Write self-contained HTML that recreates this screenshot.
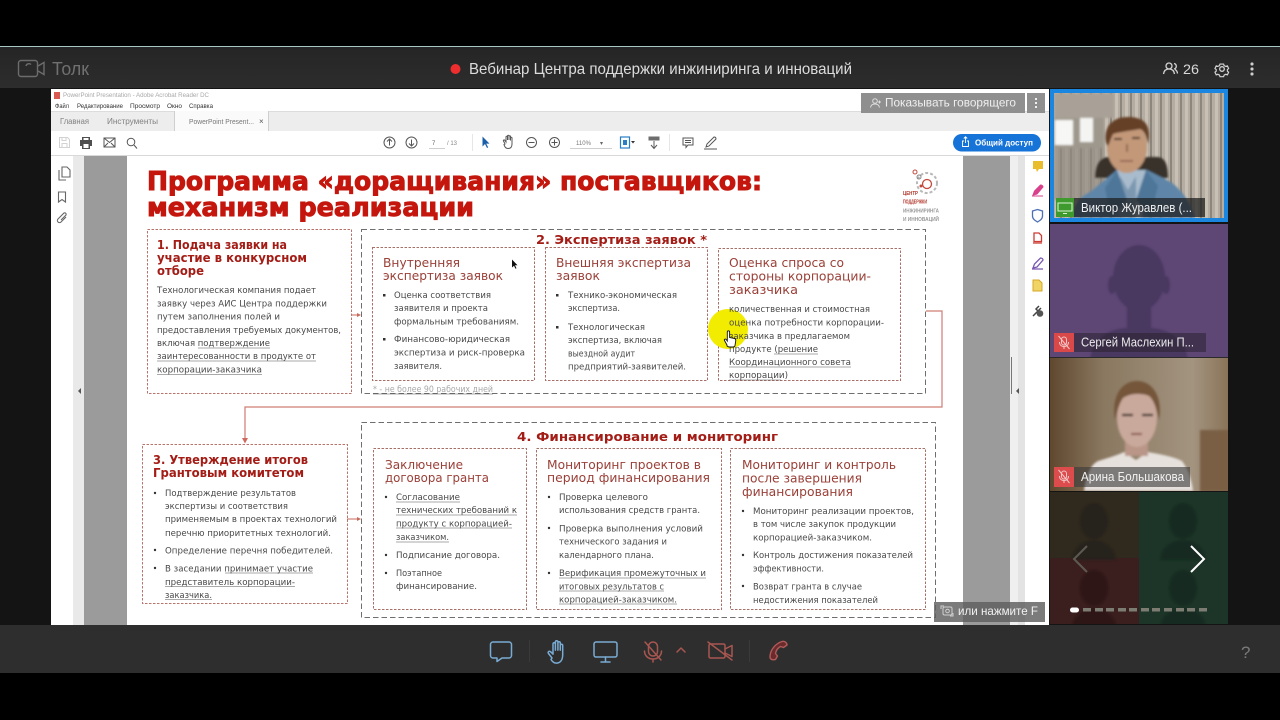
<!DOCTYPE html>
<html lang="ru"><head><meta charset="utf-8"><title>Толк</title>
<style>
html,body{margin:0;padding:0;background:#000;width:1280px;height:720px;overflow:hidden}
svg{display:block}
text{font-family:"DejaVu Sans","Liberation Sans",sans-serif}
.ls text,text.ls{font-family:"Liberation Sans",sans-serif}
.t{font-weight:bold;font-size:26px;fill:#c4170c;stroke:#c4170c;stroke-width:1}
.h{font-weight:bold;font-size:12.5px;fill:#a31c14}
.s{font-size:12.5px;fill:#9a4038}
.b{font-size:9px;fill:#484848}
.m{font-size:6.5px;fill:#333}
</style></head><body>
<svg width="1280" height="720" viewBox="0 0 1280 720" xmlns="http://www.w3.org/2000/svg">
<defs>
<filter id="f3" x="-5%" y="-5%" width="110%" height="110%"><feGaussianBlur stdDeviation=".25"/></filter>
<filter id="f2" x="-20%" y="-20%" width="140%" height="140%"><feGaussianBlur stdDeviation="1"/></filter>
<linearGradient id="hd" x1="0" y1="0" x2="0" y2="1"><stop offset="0" stop-color="#252525"/><stop offset="1" stop-color="#2d2d2d"/></linearGradient>
<linearGradient id="g3" x1="0" y1="0" x2="1" y2="0"><stop offset="0" stop-color="#5f482e"/><stop offset=".3" stop-color="#8a7860"/><stop offset=".8" stop-color="#a39480"/><stop offset="1" stop-color="#8a7458"/></linearGradient>
<pattern id="st" width="10" height="10" patternUnits="userSpaceOnUse"><rect width="10" height="10" fill="#b5ada2"/><rect width="2" height="10" fill="#8d867c"/><rect x="5" width="3" height="10" fill="#c8c0b5"/></pattern>
<clipPath id="c1"><rect x="1054" y="93" width="170" height="125"/></clipPath>
<clipPath id="c2"><rect x="1050" y="224" width="178" height="133"/></clipPath>
<clipPath id="c3"><rect x="1050" y="358" width="178" height="133"/></clipPath>
<clipPath id="c4"><rect x="1050" y="492" width="178" height="132"/></clipPath>
</defs>

<rect width="1280" height="720" fill="#000"/>
<rect y="46" width="1280" height="1" fill="#a9c8c4"/>
<rect y="47" width="1280" height="41" fill="url(#hd)"/>
<rect y="88" width="1280" height="537" fill="#141414"/>
<rect y="625" width="1280" height="48" fill="#2e2e2e"/>

<!-- header -->
<g fill="none" stroke="#6c6c6c" stroke-width="1.4">
<rect x="18.5" y="60.5" width="19" height="16" rx="2.5"/><path d="M38 66l6-3.5v12L38 71"/><path d="M26 66a3 3 0 0 1 5-1.5"/>
</g>
<text x="52" y="75" font-size="18" fill="#707070" textLength="37" lengthAdjust="spacingAndGlyphs" class="ls">Толк</text>
<circle cx="455.500" cy="69" r="5" fill="#ee2e2e"/>
<text x="469" y="74" font-size="16" fill="#dcdcdc" textLength="383" lengthAdjust="spacingAndGlyphs" class="ls">Вебинар Центра поддержки инжиниринга и инноваций</text>
<g fill="none" stroke="#d4d4d4" stroke-width="1.3">
<circle cx="1169" cy="66" r="3"/><path d="M1163.500 74c.5-3.500 2.500-5 5.500-5s5 1.500 5.500 5"/><path d="M1174 63.500a2.800 2.800 0 0 1 0 5.500M1175 69.500c1.500.7 2.300 2.200 2.500 4"/>
<circle cx="1222" cy="69" r="2.300"/><path d="M1220 63.500h4l.6 1.800 1.800.8 1.800-.6 1.400 3-1.400 1.100v1.800l1.400 1.100-1.400 3-1.800-.6-1.800.8-.6 1.800h-4l-.6-1.800-1.800-.8-1.800.6-1.400-3 1.400-1.100v-1.800l-1.400-1.100 1.400-3 1.800.6 1.800-.8z" transform="translate(122 6.900) scale(.9)"/>
</g>
<text x="1183" y="74" font-size="14" fill="#d8d8d8" textLength="16" lengthAdjust="spacingAndGlyphs" class="ls">26</text>
<g fill="#cfcfcf"><rect x="1250.500" y="62.500" width="3" height="3" rx="1"/><rect x="1250.500" y="67.500" width="3" height="3" rx="1"/><rect x="1250.500" y="72.500" width="3" height="3" rx="1"/></g>

<!-- acrobat window -->
<rect x="51" y="89" width="998" height="536" fill="#fff"/>
<rect x="51" y="111" width="998" height="20" fill="#ededed"/>
<rect x="51" y="111" width="998" height=".7" fill="#d4d4d4"/>
<rect x="175" y="111" width="93" height="20" fill="#fafafa"/>
<path d="M174.500 111v20M268.500 111v20" stroke="#cfcfcf"/>
<rect x="51" y="155" width="998" height="1" fill="#d9d9d9"/>
<rect x="54" y="92" width="6" height="7" fill="#d95a50"/>
<g class="ls">
<text x="63" y="97" font-size="6.500" fill="#a8a8a8" textLength="146" lengthAdjust="spacingAndGlyphs">PowerPoint Presentation - Adobe Acrobat Reader DC</text>
<text x="55" y="108" class="m" textLength="14" lengthAdjust="spacingAndGlyphs">Файл</text>
<text x="77" y="108" class="m" textLength="46" lengthAdjust="spacingAndGlyphs">Редактирование</text>
<text x="130" y="108" class="m" textLength="30" lengthAdjust="spacingAndGlyphs">Просмотр</text>
<text x="167" y="108" class="m" textLength="15" lengthAdjust="spacingAndGlyphs">Окно</text>
<text x="189" y="108" class="m" textLength="24" lengthAdjust="spacingAndGlyphs">Справка</text>
<text x="60" y="124" font-size="8" fill="#808080" textLength="29" lengthAdjust="spacingAndGlyphs">Главная</text>
<text x="107" y="124" font-size="8" fill="#808080" textLength="51" lengthAdjust="spacingAndGlyphs">Инструменты</text>
<text x="189" y="124" font-size="7.500" fill="#777" textLength="65" lengthAdjust="spacingAndGlyphs">PowerPoint Present...</text>
<text x="259" y="124" font-size="8" fill="#555">×</text>
<text x="432" y="145" font-size="6" fill="#666">7</text><text x="447" y="145" font-size="6" fill="#888">/ 13</text>
<text x="576" y="145" font-size="6" fill="#777">110%</text><text x="600" y="145" font-size="6" fill="#666">▾</text>
</g>
<!-- toolbar icons -->
<g fill="none" stroke="#d2d2d2"><path d="M59.500 137.500h8l2 2v8h-10zM62 137.500v3h4v-3M62 147.500v-4h5v4"/></g>
<g fill="#4f4f4f"><path d="M82 137h8v3h2v6h-2v3h-8v-3h-2v-6h2zM83.500 138v2h5v-2zM83.500 144v4h5v-4z"/></g>
<g fill="none" stroke="#555" stroke-width="1"><rect x="104" y="138" width="11" height="9"/><path d="M104 138l5.500 4.500 5.500-4.500M104 147l4-4M115 147l-4-4"/><circle cx="131" cy="142" r="3.800"/><path d="M134 145l3 3.500"/>
<circle cx="389.500" cy="142.500" r="5.500"/><path d="M389.500 145.500v-6M387 141.500l2.500-2.500 2.500 2.500"/>
<circle cx="411.500" cy="142.500" r="5.500"/><path d="M411.500 139.500v6M409 143.500l2.500 2.500 2.500-2.500"/>
<circle cx="531.500" cy="142.500" r="5"/><path d="M528.500 142.500h6"/>
<circle cx="554.500" cy="142.500" r="5"/><path d="M551.500 142.500h6M554.500 139.500v6"/>
<path d="M505 144l-1.500-3c-.6-1 1-1.500 1.500-.5l1 1.500v-5c0-1 1.500-1 1.500 0v3-4c0-1 1.500-1 1.500 0v4-3.500c0-1 1.500-1 1.500 0v4-2.500c0-1 1.500-1 1.500 0v6c0 3-1.500 4.500-4 4.500s-3.500-2-4-4z" />
<path d="M683 138h10v7h-5l-2 2.500V145h-3zM685 140.500h6M685 142.500h6"/>
<path d="M706 147l1-3 7-7c1.500 0 2 1 2 2l-7 7zM704 149h13"/>
<path d="M654 141v7M651 145l3 3.500 3-3.500" stroke="#5a5a5a"/></g>
<path d="M482.500 136.500v10l2.500-2.500 2 4 1.200-.6-2-3.800h3.300z" fill="#1a5fa8"/>
<rect x="648.500" y="136.500" width="11" height="4" fill="#6d6d6d"/>
<rect x="620.500" y="137" width="9" height="11" fill="#fff" stroke="#2a7fc4" stroke-width="1.200"/>
<rect x="623" y="140" width="4" height="5" fill="#2a7fc4"/>
<path d="M631 141h4l-2 2.500z" fill="#333"/>
<path d="M429 148.500h16M570 148.500h42" stroke="#cfcfcf"/>
<path d="M472.500 134v17M669.500 134v17" stroke="#e6e6e6"/>
<rect x="953" y="134" width="88" height="17.500" rx="8.700" fill="#1673d8"/>
<path d="M964 141h-1.500v5.500h6V141H967M965.500 143v-6M963.800 138.500l1.700-1.700 1.700 1.700" fill="none" stroke="#fff" stroke-width=".9"/>
<text x="975" y="145.500" font-size="8" font-weight="bold" fill="#fff" textLength="58" lengthAdjust="spacingAndGlyphs" class="ls">Общий доступ</text>

<!-- panes -->
<rect x="73" y="156" width="11" height="469" fill="#e9e9e9"/>
<rect x="84" y="156" width="43" height="469" fill="#9b9b9b"/>
<rect x="963" y="156" width="47" height="469" fill="#9b9b9b"/>
<rect x="1010" y="156" width="8" height="469" fill="#efefef"/>
<rect x="1018" y="156" width="7" height="469" fill="#e3e3e3"/>
<path d="M81 388v6l-3-3z" fill="#555"/>
<path d="M1019 388v6l-3-3z" fill="#555"/>
<path d="M1011.500 357v37" stroke="#777" stroke-width="1"/>
<g fill="none" stroke="#666" stroke-width="1.100"><path d="M62 167h5l3 3v7h-8zM59 170v10h7"/><path d="M58.500 192h7v10l-3.500-2.500-3.500 2.500z"/><path d="M66 217l-5 5a2 2 0 0 1-3-3l6-6a1.500 1.500 0 0 1 2 2l-5 5"/></g>
<!-- right tools -->
<path d="M1033 161h10v8h-4l-2 3-1-3h-3z" fill="#e9bd2b"/>
<path d="M1033 195l1.500-4 6-6c1.500 0 2.500 1 2.500 2l-6 7zM1032 196h11" fill="#d8408c" stroke="#d8408c"/>
<path d="M1037.500 209.500l5 1.500v5c0 3-2.500 4.500-5 6-2.500-1.500-5-3-5-6v-5z" fill="none" stroke="#4c6fb5" stroke-width="1.300"/>
<path d="M1034 233h5l2.500 2.500v6h-7.500zM1033 243h9" fill="none" stroke="#cc3c34" stroke-width="1.300"/>
<path d="M1033 268l1.500-4 6-6c1.500 0 2.500 1 2.500 2l-6 7zM1032 269h11" fill="none" stroke="#7a58b0" stroke-width="1.300"/>
<path d="M1033 280h6l3 3v8h-9z" fill="#f0d466" stroke="#d4a824"/>
<path d="M1033 316l5-5M1039 306l-3 3 2 2 3-3" fill="none" stroke="#444" stroke-width="1.500"/>
<circle cx="1040" cy="313.500" r="3.300" fill="#555"/>

<!-- slide -->
<g filter="url(#f3)">
<rect x="127" y="156" width="836" height="469" fill="#fff"/>
<text x="147" y="190" class="t" textLength="615" lengthAdjust="spacingAndGlyphs">Программа «доращивания» поставщиков:</text>
<text x="147" y="216" class="t" textLength="327" lengthAdjust="spacingAndGlyphs">механизм реализации</text>

<!-- logo -->
<g fill="none" stroke="#b8b8b8" stroke-width="2"><circle cx="927" cy="183" r="10" stroke-dasharray="3 2"/></g>
<circle cx="927" cy="184" r="4.500" fill="none" stroke="#c4483e" stroke-width="1.300"/>
<circle cx="915" cy="172" r="2" fill="none" stroke="#c4483e"/><circle cx="919" cy="177" r="2" fill="none" stroke="#888"/><circle cx="921" cy="186" r="1.500" fill="#c4483e"/>
<g class="ls" font-size="5.500" font-weight="bold">
<text x="903" y="195" fill="#b03428" textLength="15" lengthAdjust="spacingAndGlyphs">ЦЕНТР</text>
<text x="903" y="203.500" fill="#b03428" textLength="24" lengthAdjust="spacingAndGlyphs">ПОДДЕРЖКИ</text>
<text x="903" y="212.500" fill="#999" textLength="36" lengthAdjust="spacingAndGlyphs">ИНЖИНИРИНГА</text>
<text x="903" y="221" fill="#999" textLength="36" lengthAdjust="spacingAndGlyphs">И ИННОВАЦИЙ</text>
</g>

<!-- connectors -->
<path d="M926 311h16v96H245v32" fill="none" stroke="#cf7d74" stroke-width="1.200"/>
<path d="M242 438h6l-3 5.500z" fill="#cf6a5e"/>
<path d="M351 315h8M347 519h12" stroke="#c76a5c" stroke-width="1"/>
<path d="M357 313l4 2-4 2zM357 517l4 2-4 2z" fill="#c76a5c"/>

<!-- boxes -->
<g fill="none" stroke="#b8736a" stroke-width="1" stroke-dasharray="2.500 1.500">
<rect x="147.500" y="229.500" width="204" height="164"/>
<rect x="142.500" y="444.500" width="205" height="159"/>
</g>
<g fill="none" stroke="#6e6e6e" stroke-width="1" stroke-dasharray="5.500 3">
<rect x="361.500" y="229.500" width="564" height="164"/>
<rect x="361.500" y="422.500" width="574" height="195"/>
</g>
<g fill="none" stroke="#aa6f67" stroke-width="1" stroke-dasharray="2.500 1.500">
<rect x="372.500" y="247.500" width="162" height="133"/>
<rect x="545.500" y="247.500" width="162" height="133"/>
<rect x="718.500" y="248.500" width="182" height="132"/>
<rect x="373.500" y="448.500" width="153" height="161"/>
<rect x="536.500" y="448.500" width="185" height="161"/>
<rect x="730.500" y="448.500" width="195" height="161"/>
</g>
<rect x="536" y="236" width="172" height="11" fill="#fff"/>

<!-- box 1 -->
<text x="157" y="249" class="h" textLength="130" lengthAdjust="spacingAndGlyphs">1. Подача заявки на</text>
<text x="157" y="262" class="h" textLength="150" lengthAdjust="spacingAndGlyphs">участие в конкурсном</text>
<text x="157" y="275" class="h" textLength="47" lengthAdjust="spacingAndGlyphs">отборе</text>
<text x="157" y="293" class="b" textLength="159" lengthAdjust="spacingAndGlyphs">Технологическая компания подает</text>
<text x="157" y="306.500" class="b" textLength="170" lengthAdjust="spacingAndGlyphs">заявку через АИС Центра поддержки</text>
<text x="157" y="319.500" class="b" textLength="123" lengthAdjust="spacingAndGlyphs">путем заполнения полей и</text>
<text x="157" y="333" class="b" textLength="184" lengthAdjust="spacingAndGlyphs">предоставления требуемых документов,</text>
<text x="157" y="346" class="b" textLength="113" lengthAdjust="spacingAndGlyphs">включая подтверждение</text>
<text x="157" y="359" class="b" textLength="159" lengthAdjust="spacingAndGlyphs">заинтересованности в продукте от</text>
<text x="157" y="372.500" class="b" textLength="105" lengthAdjust="spacingAndGlyphs">корпорации-заказчика</text>

<!-- box 2 -->
<text x="536" y="244" class="h" font-size="13" textLength="171" lengthAdjust="spacingAndGlyphs">2. Экспертиза заявок *</text>
<text x="383" y="267" class="s" textLength="77" lengthAdjust="spacingAndGlyphs">Внутренняя</text>
<text x="383" y="280" class="s" textLength="120" lengthAdjust="spacingAndGlyphs">экспертиза заявок</text>
<text x="394" y="298" class="b" textLength="97" lengthAdjust="spacingAndGlyphs">Оценка соответствия</text>
<text x="394" y="311" class="b" textLength="94" lengthAdjust="spacingAndGlyphs">заявителя и проекта</text>
<text x="394" y="324.500" class="b" textLength="125" lengthAdjust="spacingAndGlyphs">формальным требованиям.</text>
<text x="394" y="342" class="b" textLength="116" lengthAdjust="spacingAndGlyphs">Финансово-юридическая</text>
<text x="394" y="355.500" class="b" textLength="131" lengthAdjust="spacingAndGlyphs">экспертиза и риск-проверка</text>
<text x="394" y="369" class="b" textLength="48" lengthAdjust="spacingAndGlyphs">заявителя.</text>
<text x="373" y="392" font-size="8.500" fill="#a8a8a8" textLength="120" lengthAdjust="spacingAndGlyphs">* - не более 90 рабочих дней</text>

<text x="556" y="267" class="s" textLength="135" lengthAdjust="spacingAndGlyphs">Внешняя экспертиза</text>
<text x="556" y="280" class="s" textLength="44" lengthAdjust="spacingAndGlyphs">заявок</text>
<text x="568" y="298" class="b" textLength="109" lengthAdjust="spacingAndGlyphs">Технико-экономическая</text>
<text x="568" y="311" class="b" textLength="52" lengthAdjust="spacingAndGlyphs">экспертиза.</text>
<text x="568" y="330" class="b" textLength="77" lengthAdjust="spacingAndGlyphs">Технологическая</text>
<text x="568" y="343" class="b" textLength="94" lengthAdjust="spacingAndGlyphs">экспертиза, включая</text>
<text x="568" y="356.500" class="b" textLength="67" lengthAdjust="spacingAndGlyphs">выездной аудит</text>
<text x="568" y="369.500" class="b" textLength="118" lengthAdjust="spacingAndGlyphs">предприятий-заявителей.</text>

<text x="729" y="267" class="s" textLength="115" lengthAdjust="spacingAndGlyphs">Оценка спроса со</text>
<text x="729" y="280.500" class="s" textLength="142" lengthAdjust="spacingAndGlyphs">стороны корпорации-</text>
<text x="729" y="294" class="s" textLength="69" lengthAdjust="spacingAndGlyphs">заказчика</text>
<circle cx="728" cy="329" r="20" fill="#f2ec00"/>
<text x="729" y="312" class="b" textLength="141" lengthAdjust="spacingAndGlyphs">количественная и стоимостная</text>
<text x="729" y="325.500" class="b" textLength="155" lengthAdjust="spacingAndGlyphs">оценка потребности корпорации-</text>
<text x="729" y="339" class="b" textLength="121" lengthAdjust="spacingAndGlyphs">заказчика в предлагаемом</text>
<text x="729" y="352" class="b" textLength="89" lengthAdjust="spacingAndGlyphs">продукте (решение</text>
<text x="729" y="365" class="b" textLength="122" lengthAdjust="spacingAndGlyphs">Координационного совета</text>
<text x="729" y="378" class="b" textLength="59" lengthAdjust="spacingAndGlyphs">корпорации)</text>

<!-- box 3 -->
<text x="153" y="464" class="h" textLength="155" lengthAdjust="spacingAndGlyphs">3. Утверждение итогов</text>
<text x="153" y="477" class="h" textLength="151" lengthAdjust="spacingAndGlyphs">Грантовым комитетом</text>
<text x="165" y="496" class="b" textLength="131" lengthAdjust="spacingAndGlyphs">Подтверждение результатов</text>
<text x="165" y="509" class="b" textLength="123" lengthAdjust="spacingAndGlyphs">экспертизы и соответствия</text>
<text x="165" y="522" class="b" textLength="172" lengthAdjust="spacingAndGlyphs">применяемым в проектах технологий</text>
<text x="165" y="536" class="b" textLength="166" lengthAdjust="spacingAndGlyphs">перечню приоритетных технологий.</text>
<text x="165" y="553.500" class="b" textLength="168" lengthAdjust="spacingAndGlyphs">Определение перечня победителей.</text>
<text x="165" y="571.500" class="b" textLength="148" lengthAdjust="spacingAndGlyphs">В заседании принимает участие</text>
<text x="165" y="585" class="b" textLength="130" lengthAdjust="spacingAndGlyphs">представитель корпорации-</text>
<text x="165" y="598" class="b" textLength="47" lengthAdjust="spacingAndGlyphs">заказчика.</text>

<!-- box 4 -->
<text x="517" y="441" class="h" font-size="13" textLength="261" lengthAdjust="spacingAndGlyphs">4. Финансирование и мониторинг</text>
<text x="385" y="469" class="s" textLength="78" lengthAdjust="spacingAndGlyphs">Заключение</text>
<text x="385" y="482" class="s" textLength="104" lengthAdjust="spacingAndGlyphs">договора гранта</text>
<text x="396" y="500" class="b" textLength="64" lengthAdjust="spacingAndGlyphs">Согласование</text>
<text x="396" y="513" class="b" textLength="121" lengthAdjust="spacingAndGlyphs">технических требований к</text>
<text x="396" y="526.500" class="b" textLength="116" lengthAdjust="spacingAndGlyphs">продукту с корпорацией-</text>
<text x="396" y="540" class="b" textLength="53" lengthAdjust="spacingAndGlyphs">заказчиком.</text>
<text x="396" y="558" class="b" textLength="104" lengthAdjust="spacingAndGlyphs">Подписание договора.</text>
<text x="396" y="576" class="b" textLength="46" lengthAdjust="spacingAndGlyphs">Поэтапное</text>
<text x="396" y="589" class="b" textLength="81" lengthAdjust="spacingAndGlyphs">финансирование.</text>

<text x="547" y="469" class="s" textLength="154" lengthAdjust="spacingAndGlyphs">Мониторинг проектов в</text>
<text x="547" y="482" class="s" textLength="163" lengthAdjust="spacingAndGlyphs">период финансирования</text>
<text x="559" y="500" class="b" textLength="89" lengthAdjust="spacingAndGlyphs">Проверка целевого</text>
<text x="559" y="513" class="b" textLength="141" lengthAdjust="spacingAndGlyphs">использования средств гранта.</text>
<text x="559" y="531.500" class="b" textLength="144" lengthAdjust="spacingAndGlyphs">Проверка выполнения условий</text>
<text x="559" y="544.500" class="b" textLength="108" lengthAdjust="spacingAndGlyphs">технического задания и</text>
<text x="559" y="558" class="b" textLength="95" lengthAdjust="spacingAndGlyphs">календарного плана.</text>
<text x="559" y="576" class="b" textLength="147" lengthAdjust="spacingAndGlyphs">Верификация промежуточных и</text>
<text x="559" y="589.500" class="b" textLength="105" lengthAdjust="spacingAndGlyphs">итоговых результатов с</text>
<text x="559" y="602.500" class="b" textLength="118" lengthAdjust="spacingAndGlyphs">корпорацией-заказчиком.</text>

<text x="742" y="469" class="s" textLength="154" lengthAdjust="spacingAndGlyphs">Мониторинг и контроль</text>
<text x="742" y="482.500" class="s" textLength="120" lengthAdjust="spacingAndGlyphs">после завершения</text>
<text x="742" y="496" class="s" textLength="111" lengthAdjust="spacingAndGlyphs">финансирования</text>
<text x="753" y="514" class="b" textLength="161" lengthAdjust="spacingAndGlyphs">Мониторинг реализации проектов,</text>
<text x="753" y="527" class="b" textLength="143" lengthAdjust="spacingAndGlyphs">в том числе закупок продукции</text>
<text x="753" y="540.500" class="b" textLength="119" lengthAdjust="spacingAndGlyphs">корпорацией-заказчиком.</text>
<text x="753" y="558" class="b" textLength="160" lengthAdjust="spacingAndGlyphs">Контроль достижения показателей</text>
<text x="753" y="571.500" class="b" textLength="71" lengthAdjust="spacingAndGlyphs">эффективности.</text>
<text x="753" y="589.500" class="b" textLength="109" lengthAdjust="spacingAndGlyphs">Возврат гранта в случае</text>
<text x="753" y="603" class="b" textLength="125" lengthAdjust="spacingAndGlyphs">недостижения показателей</text>

<!-- underlines -->
<path d="M198 348h72M157 361h159M157 374.500h105M373 394h120M774 354h44M729 367h122M729 380h52M225 573h88M165 586.500h130M165 599.500h47M396 502h64M396 515h121M396 528h116M396 542h53M559 578h147M559 591h105M559 604h118" stroke="#555" stroke-width=".6" fill="none"/>

<!-- bullets -->
<g fill="#333">
<rect x="383" y="294" width="2.500" height="2.500"/><rect x="383" y="338" width="2.500" height="2.500"/>
<rect x="556" y="294" width="2.500" height="2.500"/><rect x="556" y="326" width="2.500" height="2.500"/>
<circle cx="155" cy="493" r="1.200"/><circle cx="155" cy="550" r="1.200"/><circle cx="155" cy="568" r="1.200"/>
<circle cx="386" cy="497" r="1.200"/><circle cx="386" cy="555" r="1.200"/><circle cx="386" cy="573" r="1.200"/>
<circle cx="549" cy="497" r="1.200"/><circle cx="549" cy="528" r="1.200"/><circle cx="549" cy="573" r="1.200"/>
<circle cx="743" cy="511" r="1.200"/><circle cx="743" cy="555" r="1.200"/><circle cx="743" cy="586" r="1.200"/>
</g>
</g>
<!-- cursors -->
<path d="M512 259.500v8l2-1.800 1.500 3 1-.5-1.500-3h2.500z" fill="#111"/>
<path d="M727 345l-2.500-4.500c-.6-1.200 1-2 1.800-.9l1 1.400v-9c0-1.600 2.300-1.600 2.300 0v5.500l5 1c1 .2 1.200 1 1.200 2l-.8 5c-.2 1-1 1.500-2 1.500h-3.500c-1 0-1.800-.4-2.500-1z" fill="#fff" stroke="#111" stroke-width=".9"/>

<!-- overlays on share -->
<rect x="861" y="93" width="164" height="20" fill="#8f8f8f"/>
<rect x="1027" y="93" width="18" height="20" fill="#8f8f8f"/>
<g fill="none" stroke="#ddd" stroke-width="1"><circle cx="875" cy="101" r="2.300"/><path d="M870.500 107.500c.4-2.500 2-3.500 4.500-3.500s4 1 4.500 3.500"/><path d="M879.500 100.500v3M878 102h3"/></g>
<text x="885" y="106.500" font-size="12" fill="#f0f0f0" textLength="131" lengthAdjust="spacingAndGlyphs" class="ls">Показывать говорящего</text>
<g fill="#f0f0f0"><rect x="1035" y="98" width="2" height="2"/><rect x="1035" y="102" width="2" height="2"/><rect x="1035" y="106" width="2" height="2"/></g>
<rect x="934" y="602" width="111" height="20" fill="#5e5e5e" fill-opacity=".82"/>
<g fill="none" stroke="#cfcfcf" stroke-width="1"><rect x="943" y="607" width="9" height="8" rx="1.500"/><circle cx="947.500" cy="611" r="1.800"/><path d="M941 609v-3h3M953 613v3h-3"/></g>
<text x="958" y="615" font-size="12" fill="#f2f2f2" textLength="80" lengthAdjust="spacingAndGlyphs" class="ls">или нажмите F</text>

<!-- tile 1 -->
<rect x="1050" y="89" width="178" height="133" fill="#1a86e0"/>
<g clip-path="url(#c1)">
<rect x="1054" y="93" width="170" height="125" fill="url(#st)"/>
<g filter="url(#f2)">
<rect x="1054" y="93" width="60" height="25" fill="#a9a197"/>
<rect x="1054" y="118" width="50" height="30" fill="#9e978c"/>
<rect x="1055" y="120" width="18" height="25" fill="#f7f7f5"/><rect x="1080" y="118" width="13" height="24" fill="#f4f4f2"/>
<rect x="1054" y="148" width="50" height="52" fill="#8e8980" fill-opacity=".7"/>
<path d="M1095 178c0-12 4-21 14-21h48c8 0 11 8 11 21z" fill="#38302a"/>
<path d="M1072 218c2-12 5-20 18-26l27-22h30l20 10c12 6 24 22 28 38z" fill="#5e86a8"/>
<path d="M1116 170h30l-4 48h-22z" fill="#a9bccd"/>
<path d="M1120 176l8 14 8-14v42h-16z" fill="#4f7496" fill-opacity=".5"/>
<path d="M1117 170l10 30-16 18-6-30zM1146 170l-10 30 14 18 8-32z" fill="#4e7699"/>
<ellipse cx="1127" cy="147" rx="20" ry="26" fill="#c29879"/>
<path d="M1108 146c-5-5-5-29 20-29 20 0 23 12 20 27-2-8-3-13-8-15-10 2-21 3-27 5-2 4-3 8-5 12z" fill="#654025"/>
<path d="M1114 139h8M1132 138h8" stroke="#4e3224" stroke-width="2" fill="none"/>
<path d="M1127 144v8M1120 161h13" stroke="#8c5c48" stroke-width="1.600" fill="none"/>
</g></g>
<rect x="1074" y="198" width="131" height="19" fill="#1c1c1c" fill-opacity=".72"/>
<rect x="1056" y="198" width="18" height="19" fill="#3f9a2e"/>
<path d="M1058 203h14v8h-14zM1063 213.500h4" fill="none" stroke="#d9f0d2" stroke-width="1.100"/>
<text x="1081" y="212" font-size="12.500" fill="#f0f0f0" textLength="111" lengthAdjust="spacingAndGlyphs" class="ls">Виктор Журавлев (...</text>

<!-- tile 2 -->
<rect x="1050" y="224" width="178" height="133" fill="#5e4775"/>
<g clip-path="url(#c2)" fill="#4a3760" filter="url(#f2)">
<ellipse cx="1139" cy="278" rx="26" ry="33"/>
<ellipse cx="1112" cy="285" rx="4" ry="9"/><ellipse cx="1166" cy="285" rx="4" ry="9"/>
<rect x="1127" y="305" width="24" height="26"/>
<path d="M1090 360c2-22 20-32 38-32h22c16 0 36 10 38 32z"/>
</g>
<rect x="1074" y="333" width="132" height="19" fill="#2a2230" fill-opacity=".55"/>
<rect x="1054" y="333" width="20" height="19" fill="#d9494a"/>
<g fill="none" stroke="#f1c8c8" stroke-width="1"><rect x="1061.500" y="337" width="5" height="8" rx="2.500"/><path d="M1059.500 342c0 3 2 4.500 4.500 4.500s4.500-1.500 4.500-4.500M1064 346.500v2.500M1058.500 336l11 13"/></g>
<text x="1081" y="346.500" font-size="12.500" fill="#ececec" textLength="113" lengthAdjust="spacingAndGlyphs" class="ls">Сергей Маслехин П...</text>
<rect x="1050" y="357" width="178" height="1" fill="#2a2a2a"/>

<!-- tile 3 -->
<rect x="1050" y="358" width="178" height="133" fill="url(#g3)"/>
<g clip-path="url(#c3)"><g filter="url(#f2)">
<rect x="1200" y="430" width="30" height="62" fill="#7a5f44"/>
<path d="M1084 491c2-14 6-26 14-30 10-3 20-6 26-9l12 8 12-8c10 2 24 4 34 9 6 8 10 20 11 30z" fill="#e6e1dd"/>
<rect x="1125" y="436" width="23" height="20" fill="#b99687"/>
<ellipse cx="1137" cy="418" rx="20" ry="29" fill="#c9a99b"/>
<path d="M1115 420c-4-23 6-39 22-39s26 16 22 39c-2-10-5-20-10-24-10-4-20-2-26 2-4 6-6 14-8 22z" fill="#74563a"/>
<path d="M1122 415h11M1142 415h11" stroke="#3e302a" stroke-width="2.200"/>
<path d="M1131 434h11" stroke="#8a5450" stroke-width="2"/>
</g></g>
<rect x="1074" y="467" width="116" height="20" fill="#3c3c3c" fill-opacity=".62"/>
<rect x="1054" y="467" width="20" height="20" fill="#dc4c4c"/>
<g fill="none" stroke="#f1c8c8" stroke-width="1"><rect x="1061.500" y="471" width="5" height="8" rx="2.500"/><path d="M1059.500 476c0 3 2 4.500 4.500 4.500s4.500-1.500 4.500-4.500M1064 480.500v2.500M1058.500 470l11 13"/></g>
<text x="1081" y="481" font-size="12.500" fill="#f2f2f2" textLength="103" lengthAdjust="spacingAndGlyphs" class="ls">Арина Большакова</text>

<!-- tile 4 -->
<g clip-path="url(#c4)">
<rect x="1050" y="492" width="89" height="66" fill="#302a1e"/>
<rect x="1139" y="492" width="89" height="66" fill="#1d3528"/>
<rect x="1050" y="558" width="89" height="66" fill="#3b1f1f"/>
<rect x="1139" y="558" width="89" height="66" fill="#1d3528"/>
<g filter="url(#f2)">
<g fill="#27231a"><ellipse cx="1094" cy="521" rx="14" ry="18"/><path d="M1072 560c1-14 14-20 22-20s21 6 22 20z"/></g>
<g fill="#162a20"><ellipse cx="1183" cy="521" rx="14" ry="18"/><path d="M1160 560c1-14 14-20 23-20s22 6 23 20z"/></g>
<g fill="#2e1818"><ellipse cx="1094" cy="588" rx="14" ry="18"/><path d="M1072 628c1-14 14-20 22-20s21 6 22 20z"/></g>
<g fill="#162a20"><ellipse cx="1183" cy="588" rx="14" ry="18"/><path d="M1160 628c1-14 14-20 23-20s22 6 23 20z"/></g>
</g></g>
<path d="M1087 546l-13 13 13 13" fill="none" stroke="#5e5a52" stroke-width="2"/>
<path d="M1191 546l13 13-13 13" fill="none" stroke="#fff" stroke-width="2"/>
<rect x="1070" y="607.500" width="9" height="5" rx="2.500" fill="#fff"/>
<g fill="#7c7c72"><rect x="1083" y="608" width="8" height="3.500"/><rect x="1095" y="608" width="8" height="3.500"/><rect x="1106" y="608" width="8" height="3.500"/><rect x="1118" y="608" width="8" height="3.500"/><rect x="1129" y="608" width="8" height="3.500"/><rect x="1141" y="608" width="8" height="3.500"/><rect x="1152" y="608" width="8" height="3.500"/><rect x="1164" y="608" width="8" height="3.500"/><rect x="1176" y="608" width="8" height="3.500"/><rect x="1187" y="608" width="8" height="3.500"/><rect x="1199" y="608" width="8" height="3.500"/></g>

<!-- bottom bar -->
<path d="M529.500 640v22M749.500 640v22" stroke="#3a3a3a"/>
<g fill="none" stroke="#79acd4" stroke-width="1.500" stroke-linejoin="round" stroke-linecap="round">
<path d="M493 642h16a2.500 2.500 0 0 1 2.500 2.500v11a2.500 2.500 0 0 1-2.500 2.500h-7l-5 3.500v-3.500h-4a2.500 2.500 0 0 1-2.500-2.500v-11a2.500 2.500 0 0 1 2.500-2.500z"/>
<path d="M552 658l-3.500-4.500c-1.200-1.600.8-3 2.200-1.700l2.300 2.300v-10c0-1.800 2.400-1.800 2.400 0v6-8c0-1.800 2.500-1.800 2.500 0v8-7c0-1.800 2.400-1.800 2.400 0v7-4.500c0-1.800 2.400-1.800 2.400 0v9c0 5.500-2.400 8.500-6.500 8.500-2.300 0-3.900-1.500-5.200-3.600z"/>
<rect x="594" y="642" width="23" height="15" rx="2"/><path d="M601 662h9M605.500 657v5"/>
</g>
<g fill="none" stroke="#a85650" stroke-width="1.500" stroke-linecap="round" stroke-linejoin="round">
<rect x="648.500" y="642" width="9" height="14" rx="4.500"/><path d="M644.500 651c0 5 4 8 8.500 8s8.500-3 8.500-8M653 659v3M645 642l16 18"/>
<path d="M677 652l4-4 4 4"/>
<rect x="709" y="644" width="16" height="14" rx="1.500"/><path d="M725 649l7-3.500v11l-7-3.500M708 642l24 18"/>
</g>
<path d="M770 657c0-7 5.500-13.500 12-15.500 2.500-.7 5 1 5 3.500l-3.500 2.500-3-1c-3 1.500-4.500 4.500-5 7l2 2.500-2 3.500c-3 .7-5.500 0-5.500-2.500z" fill="#6b2b2c" stroke="#b05b5a" stroke-width="1.400" stroke-linejoin="round"/>
<text x="1241" y="658" font-size="17" fill="#7a7a7a" class="ls">?</text>
</svg>
</body></html>
